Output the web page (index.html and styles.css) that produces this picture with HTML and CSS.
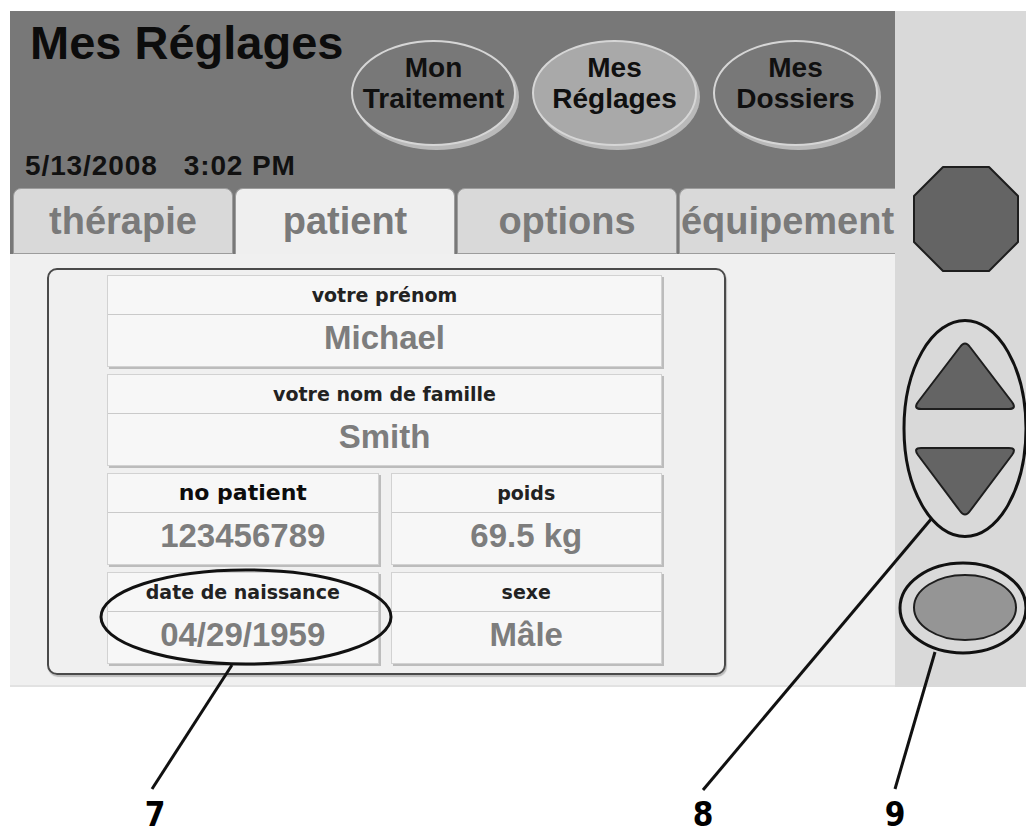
FILE: index.html
```html
<!doctype html>
<html>

<head>
    <meta charset="utf-8" />
    <title>Mes Réglages</title>
    <link rel="stylesheet" href="styles.css">
</head>

<body>
    <div class="page">
        <div class="device">
            <div class="screen">
                <header class="top">
                    <div class="top-left">
                        <h1 class="title">Mes Réglages</h1>
                        <div class="clock">5/13/2008&nbsp;&nbsp;&nbsp;3:02 PM</div>
                    </div>
                    <nav class="menu">
                        <a class="pill">Mon<br>Traitement</a>
                        <a class="pill pill-on">Mes<br>Réglages</a>
                        <a class="pill">Mes<br>Dossiers</a>
                    </nav>
                </header>

                <div class="tabs">
                    <div class="tab">thérapie</div>
                    <div class="tab tab-on">patient</div>
                    <div class="tab">options</div>
                    <div class="tab tab-last">équipement</div>
                </div>

                <main class="content">
                    <div class="panel">
                        <div class="field">
                            <div class="field-label">votre prénom</div>
                            <div class="field-value">Michael</div>
                        </div>
                        <div class="field">
                            <div class="field-label">votre nom de famille</div>
                            <div class="field-value">Smith</div>
                        </div>
                        <div class="field-row">
                            <div class="field">
                                <div class="field-label field-label-big">no patient</div>
                                <div class="field-value">123456789</div>
                            </div>
                            <div class="field">
                                <div class="field-label">poids</div>
                                <div class="field-value">69.5 kg</div>
                            </div>
                        </div>
                        <div class="field-row">
                            <div class="field">
                                <div class="field-label">date de naissance</div>
                                <div class="field-value">04/29/1959</div>
                            </div>
                            <div class="field">
                                <div class="field-label">sexe</div>
                                <div class="field-value">Mâle</div>
                            </div>
                        </div>
                    </div>
                </main>
            </div>

            <aside class="keys">
                <svg class="key-stop" width="106" height="106" viewBox="0 0 106 106">
                    <polygon points="30,1 76,1 105,30 105,76 76,105 30,105 1,76 1,30" fill="#646464"
                        stroke="#1e1e1e" stroke-width="2" stroke-linejoin="round" />
                </svg>
                <svg class="key-arrows" width="104" height="178" viewBox="0 0 104 178">
                    <path d="M 47 7 Q 52 0 57 7 L 99 62 Q 104 69 96 69 L 8 69 Q 0 69 5 62 Z" fill="#646464"
                        stroke="#1e1e1e" stroke-width="2" />
                    <path d="M 8 108 L 96 108 Q 104 108 99 115 L 57 171 Q 52 178 47 171 L 5 115 Q 0 108 8 108 Z"
                        fill="#646464" stroke="#1e1e1e" stroke-width="2" />
                </svg>
                <svg class="key-ok" width="104" height="67" viewBox="0 0 104 67">
                    <ellipse cx="52" cy="33.5" rx="51" ry="32.5" fill="#959595" stroke="#1e1e1e" stroke-width="2" />
                </svg>
            </aside>
        </div>

        <!-- callouts drawn over the screenshot -->
        <svg class="callouts" width="1026" height="833" viewBox="0 0 1026 833">
            <g fill="none" stroke="#111" stroke-width="3">
                <ellipse cx="246" cy="617" rx="145" ry="47" />
                <ellipse cx="965" cy="428.5" rx="61" ry="108" />
                <ellipse cx="963" cy="608" rx="63" ry="45" />
                <line x1="232" y1="665" x2="152" y2="789" />
                <line x1="932" y1="518" x2="703" y2="790" />
                <line x1="935" y1="652" x2="895" y2="789" />
            </g>
        </svg>
        <span class="num num-7">7</span>
        <span class="num num-8">8</span>
        <span class="num num-9">9</span>
    </div>
</body>

</html>
```

FILE: styles.css
```css
* {
    box-sizing: border-box;
}

html,
body {
    margin: 0;
    padding: 0;
    background: #ffffff;
    font-family: 'Liberation Sans', Arial, sans-serif;
}

.page {
    position: relative;
    width: 1026px;
    height: 833px;
    overflow: hidden;
}

.device {
    display: flex;
    margin: 11px 0 0 10px;
    height: 676px;
}

.screen {
    width: 885px;
    display: flex;
    flex-direction: column;
}

/* header */

.top {
    display: flex;
    height: 177px;
    background: #787878;
}

.top-left {
    width: 341px;
    padding: 8px 0 7px 20px;
    display: flex;
    flex-direction: column;
    justify-content: space-between;
}

.title {
    margin: 0;
    font-size: 47px;
    line-height: 47px;
    font-weight: bold;
    color: #0c0c0c;
    white-space: nowrap;
}

.clock {
    margin-left: -5px;
    font-size: 28px;
    line-height: 30px;
    font-weight: bold;
    color: #111;
    letter-spacing: 0.9px;
    white-space: nowrap;
}

.menu {
    display: flex;
    gap: 16px;
    padding-top: 29px;
}

.pill {
    width: 165px;
    height: 106px;
    border-radius: 50%;
    border: 2px solid #d6d6d6;
    box-shadow: 3px 4px 0 #b9b9b9;
    background: #787878;
    display: flex;
    align-items: center;
    justify-content: center;
    padding-bottom: 20px;
    text-align: center;
    font-size: 28px;
    line-height: 31px;
    font-weight: bold;
    color: #101010;
}

.pill-on {
    background: #a9a9a9;
}

/* tabs */

.tabs {
    display: flex;
    gap: 2px;
    height: 66px;
    padding-left: 3px;
    background: #787878;
}

.tab {
    width: 220px;
    border: 1px solid #9c9c9c;
    border-radius: 8px 8px 0 0;
    background: #d9d9d9;
    text-align: center;
    font-size: 38px;
    line-height: 64px;
    font-weight: bold;
    color: #7a7a7a;
    white-space: nowrap;
    overflow: hidden;
}

.tab-on {
    background: #efefef;
    border-bottom: none;
}

.tab-last {
    flex: 1;
    border-right: none;
    border-radius: 8px 0 0 0;
}

/* content */

.content {
    flex: 1;
    background: #f0f0f0;
    border-bottom: 2px solid #e2e2e2;
    padding: 14px 0 0 37px;
}

.panel {
    width: 679px;
    height: 407px;
    border: 2px solid #4a4a4a;
    border-radius: 10px;
    box-shadow: 1px 2px 1px #bcbcbc;
    padding: 5px 0 0 58px;
    display: flex;
    flex-direction: column;
    gap: 7px;
}

.field-row {
    display: flex;
    gap: 12px;
    width: 555px;
}

.field {
    width: 555px;
    background: #f7f7f7;
    border: 1px solid #d2d2d2;
    box-shadow: 2px 2px 0 #bcbcbc;
    text-align: center;
}

.field-row .field {
    flex: 1;
    width: auto;
}

.field-label {
    height: 39px;
    line-height: 38px;
    border-bottom: 1px solid #cacaca;
    font-family: 'DejaVu Sans', Verdana, sans-serif;
    font-size: 19px;
    font-weight: bold;
    color: #222;
}

.field-label-big {
    font-size: 22px;
    color: #0c0c0c;
}

.field-value {
    height: 51px;
    line-height: 46px;
    font-size: 33px;
    font-weight: bold;
    color: #7d7d7d;
}

/* hardware keys */

.keys {
    width: 131px;
    background: #d9d9d9;
    display: flex;
    flex-direction: column;
    padding: 155px 0 0 18px;
}

.key-arrows {
    margin-top: 68px;
}

.key-ok {
    margin-top: 56px;
}

/* callouts */

.callouts {
    position: absolute;
    top: 0;
    left: 0;
    pointer-events: none;
}

.num {
    position: absolute;
    top: 798px;
    width: 30px;
    text-align: center;
    font-family: 'DejaVu Sans', sans-serif;
    font-stretch: condensed;
    font-size: 33px;
    line-height: 33px;
    font-weight: bold;
    color: #000;
}

.num-7 {
    left: 140px;
}

.num-8 {
    left: 688px;
}

.num-9 {
    left: 880px;
}
```
